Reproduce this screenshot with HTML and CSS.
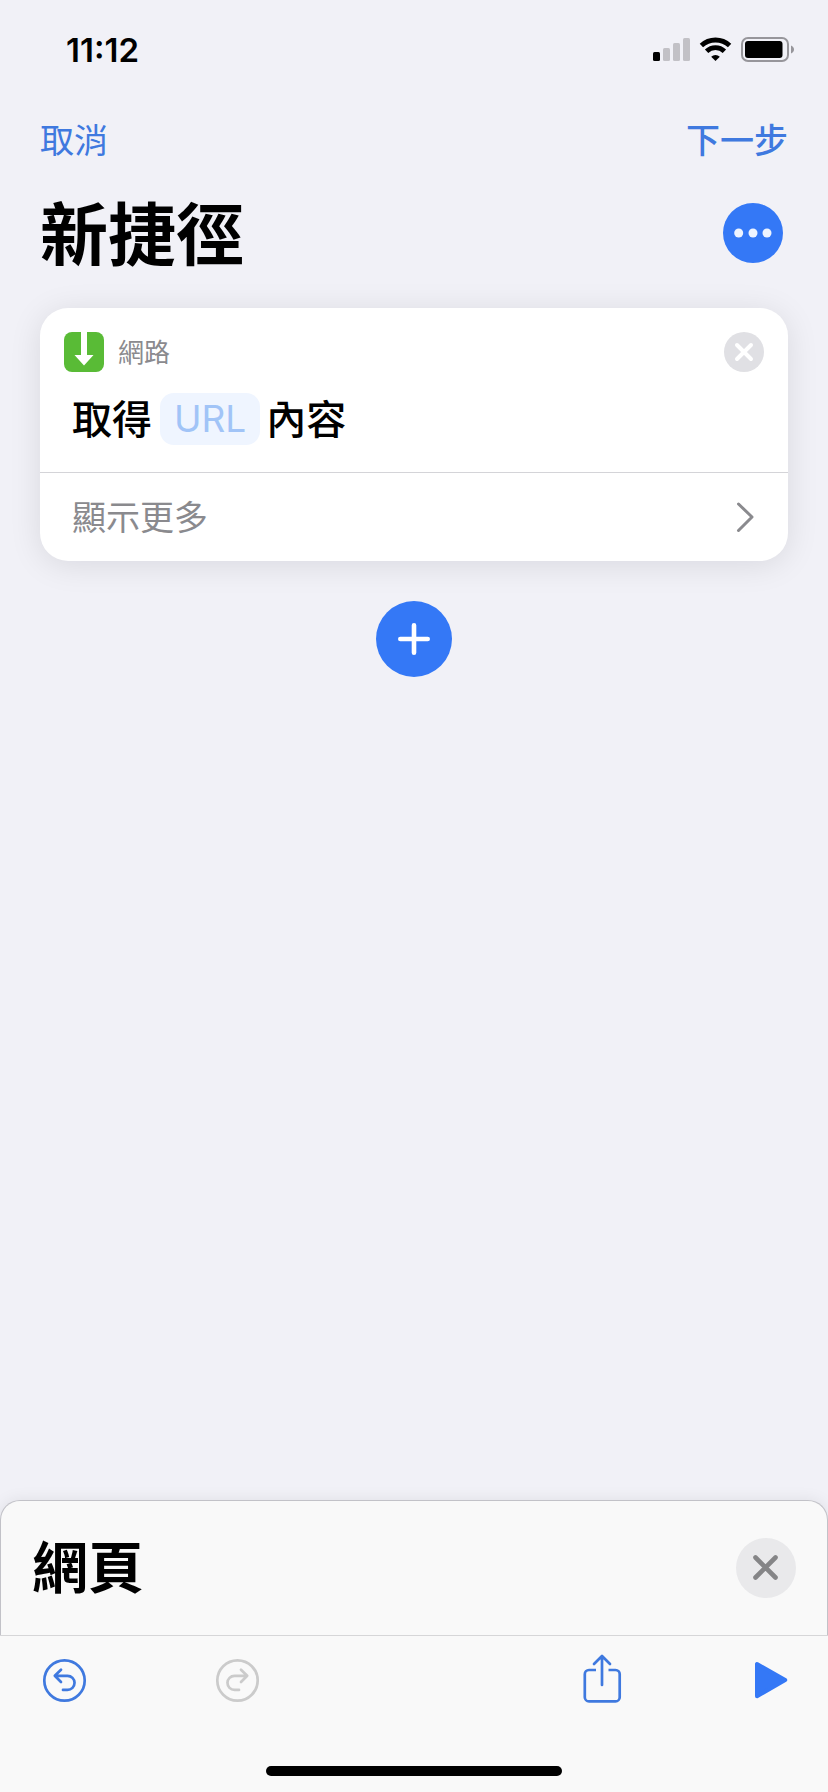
FILE: index.html
```html
<!DOCTYPE html>
<html lang="zh-Hant">
<head>
<meta charset="utf-8">
<meta name="viewport" content="width=device-width, initial-scale=1">
<title>新捷徑</title>
<link rel="stylesheet" href="styles.css">
</head>
<body>
<div class="app">
  <div class="status">
    <time class="clock">11:12</time>
    <svg class="indicators" width="142" height="26" viewBox="0 0 142 26" aria-hidden="true">
      <rect x="0" y="15" width="7" height="9" rx="1.5"/>
      <g fill="#c2c1c6">
        <rect x="10" y="11" width="7" height="13" rx="1.5"/>
        <rect x="20" y="6" width="7" height="18" rx="1.5"/>
        <rect x="30" y="1" width="7" height="23" rx="1.5"/>
      </g>
      <g fill="none" stroke="#000" stroke-width="4.8">
        <path d="M48.4 8.6a20.5 20.5 0 0 1 28.2 0"/>
        <path d="M53.6 14.2a12.8 12.8 0 0 1 17.8 0"/>
      </g>
      <path d="M62.500 24l-4.300-4.300a6.200 6.200 0 0 1 8.600 0z"/>
      <rect x="89" y="1" width="46" height="23" rx="6" fill="none" stroke="#97969b" stroke-width="2"/>
      <rect x="92" y="4" width="37.500" height="17" rx="3"/>
      <path d="M138 8.500c4 1.500 4 6.500 0 8z" fill="#97969b"/>
    </svg>
  </div>

  <header class="header">
    <nav class="nav">
      <button class="link" type="button">取消</button>
      <button class="link strong" type="button">下一步</button>
    </nav>
    <div class="heading">
      <h1 class="title">新捷徑</h1>
      <button class="round more" type="button" aria-label="更多選項">
        <svg width="60" height="60" viewBox="0 0 60 60" fill="#eef4ff"><circle cx="15.700" cy="30" r="4.500"/><circle cx="30" cy="30" r="4.500"/><circle cx="44" cy="30" r="4.500"/></svg>
      </button>
    </div>
  </header>

  <main class="editor">
    <section class="card">
      <div class="card-head">
        <svg width="40" height="40" viewBox="0 0 40 40" aria-hidden="true">
          <rect width="40" height="40" rx="8" fill="#59bb36"/>
          <path d="M17 0h6v23h6.500L20 33.500 10.500 23H17z" fill="#fff"/>
        </svg>
        <span class="category">網路</span>
        <button class="round remove" type="button" aria-label="移除動作">
          <svg width="40" height="40" viewBox="0 0 40 40" fill="none" stroke="#fff" stroke-width="4" stroke-linecap="round"><path d="M13 13l14 14M27 13L13 27"/></svg>
        </button>
      </div>
      <p class="action"><span class="word">取得</span><button class="token" type="button">URL</button><span class="word">內容</span></p>
      <button class="show-more" type="button">
        <span class="word">顯示更多</span>
        <svg width="18" height="32" viewBox="0 0 18 32" fill="none" stroke="#8a8a8e" stroke-width="3" stroke-linecap="round" stroke-linejoin="round"><path d="M2.500 3l13.500 13L2.500 29.500"/></svg>
      </button>
    </section>
    <button class="round add" type="button" aria-label="加入動作">
      <svg width="76" height="76" viewBox="0 0 76 76" fill="none" stroke="#fff" stroke-width="4.600" stroke-linecap="round"><path d="M38 24.300v27.400M24.300 38h27.400"/></svg>
    </button>
  </main>

  <section class="sheet">
    <h2 class="sheet-title">網頁</h2>
    <button class="round close" type="button" aria-label="關閉">
      <svg width="60" height="60" viewBox="0 0 60 60" fill="none" stroke="#858587" stroke-width="4.600" stroke-linecap="round"><path d="M19.500 19.500l20 20M39.500 19.500l-20 20"/></svg>
    </button>
  </section>

  <footer class="toolbar">
    <div class="tools">
      <div class="group history">
        <button class="tool" type="button" aria-label="還原">
          <svg width="48" height="48" viewBox="0 0 48 48" fill="none" stroke="#3f79df" stroke-width="2.700" stroke-linecap="round" stroke-linejoin="round"><circle cx="24.500" cy="24.500" r="20.200"/><path d="M21 13.700l-6.200 6.100 6.200 6.200M15 19.800h12.500a7 7 0 0 1 0 14.100H23"/></svg>
        </button>
        <button class="tool" type="button" aria-label="重做" disabled>
          <svg width="48" height="48" viewBox="0 0 48 48" fill="none" stroke="#cbcbcb" stroke-width="2.700" stroke-linecap="round" stroke-linejoin="round"><circle cx="24.500" cy="24.500" r="20.200"/><path d="M28 13.700l6.200 6.100-6.200 6.200M34 19.800H21.500a7 7 0 0 0 0 14.100H26"/></svg>
        </button>
      </div>
      <div class="group">
        <button class="tool" type="button" aria-label="分享">
          <svg width="48" height="52" viewBox="0 4 48 52" fill="none" stroke="#3f79df" stroke-width="2.700" stroke-linecap="round" stroke-linejoin="round"><path d="M24 35V6.500M16 14L24 6l8 8"/><path stroke-linecap="butt" d="M18 20h-7a4.200 4.200 0 0 0-4.200 4.200v23a4.200 4.200 0 0 0 4.200 4.200h26.500a4.200 4.200 0 0 0 4.200-4.200v-23a4.200 4.200 0 0 0-4.200-4.200h-7"/></svg>
        </button>
        <button class="tool" type="button" aria-label="執行">
          <svg width="48" height="48" viewBox="0 0 48 48" fill="#3478f6" stroke="#3478f6" stroke-width="4" stroke-linejoin="round"><path d="M10 8v32.200L38.200 24z"/></svg>
        </button>
      </div>
    </div>
    <div class="home"></div>
  </footer>
</div>
</body>
</html>
```
FILE: styles.css
```css
* {
  box-sizing: border-box;
}

body {
  margin: 0;
  background: #f1f1f7;
  color: #000;
  font-family: Inter, "Noto Sans CJK TC", sans-serif;
}

button {
  padding: 0;
  border: 0;
  background: none;
  color: inherit;
  font: inherit;
  cursor: pointer;
}

svg {
  display: block;
}

.app {
  display: flex;
  flex-direction: column;
  min-height: 100vh;
}

.status {
  display: flex;
  align-items: center;
  justify-content: space-between;
  height: 100px;
  padding: 0 33px 0 66px;
}

.clock {
  font-size: 33px;
  font-weight: 600;
  line-height: 40px;
}

.header {
  padding: 17px 40px 0;
}

.nav,
.heading {
  display: flex;
  align-items: center;
  justify-content: space-between;
}

.link {
  color: #3f79df;
  font-size: 34px;
  line-height: 48px;
}

.strong {
  font-weight: 500;
}

.heading {
  height: 135px;
  padding-right: 5px;
}

.title {
  margin: 0;
  padding-top: 4px;
  font-size: 68px;
  font-weight: 700;
  line-height: 96px;
}

.round {
  flex: none;
  border-radius: 50%;
}

.more,
.add {
  background: #3478f6;
}

.editor {
  display: flex;
  flex: 1;
  flex-direction: column;
  align-items: center;
  gap: 40px;
  padding: 8px 40px 40px;
}

.card {
  align-self: stretch;
  overflow: hidden;
  border-radius: 28px;
  background: #fff;
  box-shadow: 0 4px 32px rgba(0, 0, 20, 0.1);
}

.card-head {
  display: flex;
  align-items: center;
  gap: 14px;
  padding: 24px 24px 0;
}

.category {
  flex: 1;
  padding-top: 2px;
  color: #8a8a8e;
  font-size: 26px;
  line-height: 38px;
}

.remove {
  background: #e0e0e4;
}

.action {
  display: flex;
  align-items: center;
  margin: 0;
  padding: 20px 32px 26px;
  font-size: 40px;
  font-weight: 500;
  line-height: 52px;
}

.word {
  padding-top: 2px;
}

.token {
  margin: 0 6px 0 8px;
  padding: 0 14px;
  border-radius: 14px;
  background: #eff5ff;
  color: #a1c4f7;
  font-size: 37px;
  font-weight: 400;
}

.show-more {
  display: flex;
  align-items: center;
  justify-content: space-between;
  width: 100%;
  height: 89px;
  padding: 0 34px 0 32px;
  border-top: 1px solid #d4d4d8;
  color: #8a8a8e;
  font-size: 34px;
  line-height: 48px;
}

.sheet {
  display: flex;
  align-items: center;
  justify-content: space-between;
  height: 135px;
  padding: 0 31px;
  border: 1px solid #c2c2c8;
  border-bottom: 0;
  border-radius: 20px 20px 0 0;
  background: #f9f9f9;
  box-shadow: 0 0 16px rgba(0, 0, 20, 0.08);
}

.sheet-title {
  margin: 0;
  font-size: 56px;
  font-weight: 700;
  line-height: 80px;
}

.close {
  background: #e9e9eb;
}

.toolbar {
  position: relative;
  display: flex;
  flex-direction: column;
  align-items: center;
  justify-content: space-between;
  height: 157px;
  padding: 18px 0 16px;
  border-top: 1px solid #d6d6d8;
  background: #f9f9f9;
}

.tools,
.group {
  display: flex;
  align-items: center;
  justify-content: space-between;
}

.tools {
  width: 100%;
  padding: 0 33px 0 40px;
}

.group {
  gap: 121px;
}

.history {
  gap: 125px;
}

.home {
  width: 296px;
  height: 10px;
  border-radius: 5px;
  background: #000;
}
```
